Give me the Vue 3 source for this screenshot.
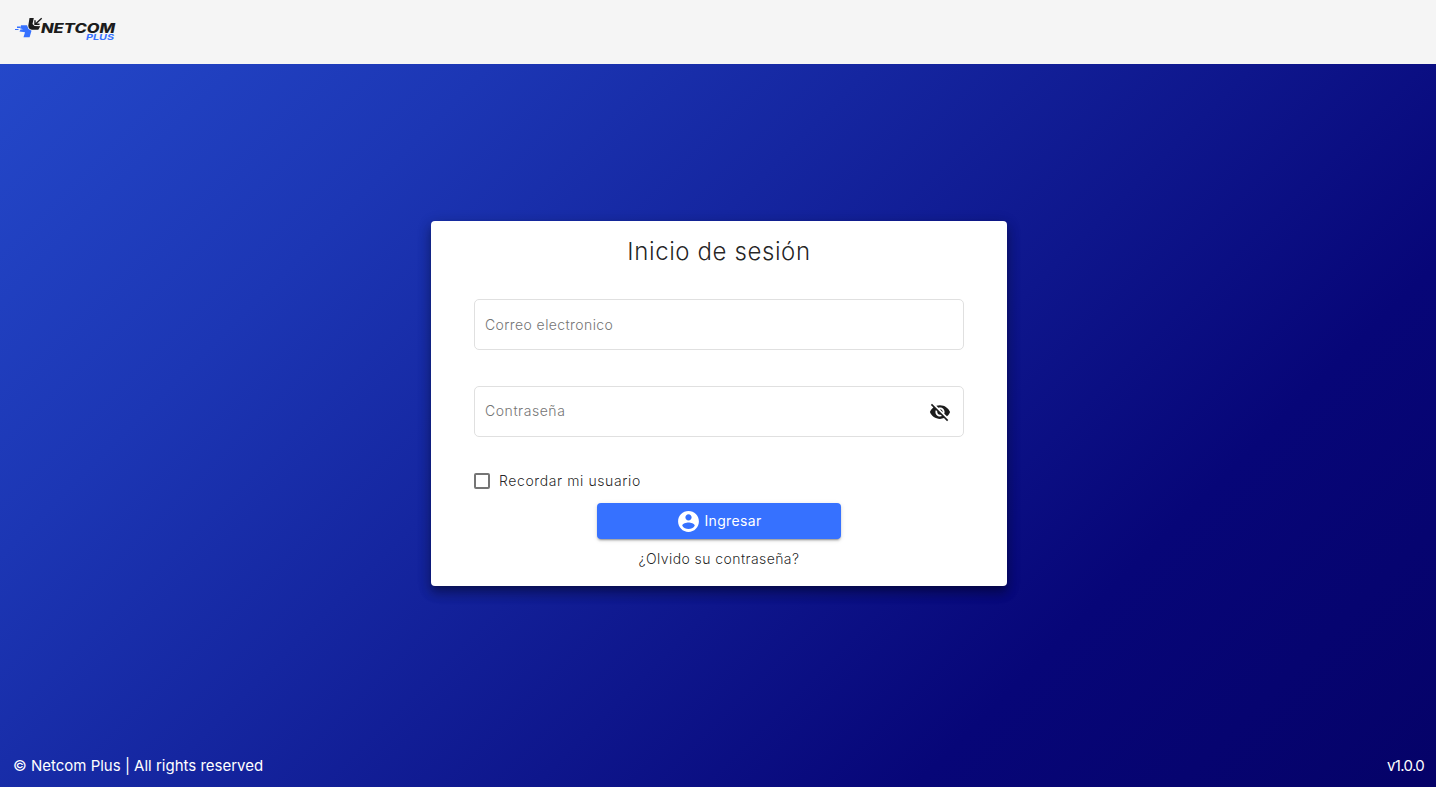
<script setup>
import { ref } from 'vue'

const email = ref('')
const password = ref('')
const remember = ref(false)
const visible = ref(false)
</script>

<template>
  <div class="page">
    <header class="toolbar">
      <svg class="logo" viewBox="0 0 104 28" role="img" aria-label="Netcom Plus">
        <path class="blue" d="M6 9.300H12L13.500 13 16.500 14.800 14.600 21.300H8.500L10 16.200 4.500 15.500 5.500 13.600 8 13.300 5 12.300Z" />
        <path class="blue" d="M2 10.500H5V12H2ZM0 13H3.500V14H0Z" />
        <path class="black" d="M14.500 2H18.800L17.500 8 19.500 10 25.300 10.300 23.300 13.700H17Q13.300 13.300 13.300 9.500Z" />
        <path class="arrow" d="M26.700 2.200L20.500 8M20 4.200V8.300H24.500" />
        <text class="black name" x="26" y="16.700" textLength="74" lengthAdjust="spacingAndGlyphs">NETCOM</text>
        <text class="blue plus" x="71" y="24.400" textLength="28" lengthAdjust="spacingAndGlyphs">PLUS</text>
      </svg>
    </header>

    <main class="content">
      <form class="card" @submit.prevent>
        <h1>Inicio de sesión</h1>
        <label class="field">
          <input v-model="email" class="email" type="text" placeholder="Correo electronico" />
        </label>
        <label class="field">
          <input v-model="password" class="password" :type="visible ? 'text' : 'password'" placeholder="Contraseña" />
          <svg class="eye" viewBox="0 0 24 24" @click.prevent="visible = !visible">
            <path d="M12 7c2.760 0 5 2.240 5 5 0 .65-.13 1.260-.36 1.830l2.920 2.920c1.510-1.260 2.700-2.890 3.430-4.750-1.730-4.390-6-7.500-11-7.500-1.400 0-2.740.25-3.980.7l2.160 2.160C10.740 7.130 11.350 7 12 7zM2 4.270l2.280 2.280.46.46C3.080 8.300 1.780 10.020 1 12c1.730 4.390 6 7.500 11 7.500 1.550 0 3.030-.3 4.380-.84l.42.42L19.730 22 21 20.730 3.270 3 2 4.270zM7.530 9.800l1.550 1.550c-.05.21-.08.43-.08.65 0 1.660 1.340 3 3 3 .22 0 .44-.03.65-.08l1.550 1.550c-.67.33-1.410.53-2.200.53-2.760 0-5-2.240-5-5 0-.79.2-1.530.53-2.200zm4.310-.78l3.150 3.150.02-.16c0-1.660-1.340-3-3-3l-.17.01z" />
          </svg>
        </label>
        <label class="remember">
          <input v-model="remember" type="checkbox" />
          <span>Recordar mi usuario</span>
        </label>
        <button class="submit" type="submit">
          <svg viewBox="0 0 24 24">
            <path d="M12 2C6.480 2 2 6.480 2 12s4.480 10 10 10 10-4.480 10-10S17.520 2 12 2zm0 3c1.660 0 3 1.340 3 3s-1.340 3-3 3-3-1.340-3-3 1.340-3 3-3zm0 14.200c-2.500 0-4.710-1.280-6-3.220.03-1.990 4-3.080 6-3.080 1.990 0 5.970 1.090 6 3.080-1.290 1.940-3.500 3.220-6 3.220z" />
          </svg>
          <span>Ingresar</span>
        </button>
        <a class="forgot">¿Olvido su contraseña?</a>
      </form>
    </main>

    <footer class="footer">
      <span class="copyright">© Netcom Plus | All rights reserved</span>
      <span class="version">v1.0.0</span>
    </footer>
  </div>
</template>

<style>
body { margin: 0; }
</style>

<style scoped>
* { box-sizing: border-box; }
.page {
  height: 100vh;
  display: flex;
  flex-direction: column;
  font-family: Inter, "Open Sans", sans-serif;
  font-size: 14px;
  font-weight: 300;
  background: linear-gradient(135deg, #254acc 0%, #1c36b4 25%, #070678 76.5%, #050268 100%);
}
.toolbar { height: 64px; flex: none; background: #f5f5f5; padding: 16px 15px; }
.logo { display: block; width: 104px; height: 28px; }
.blue { fill: #3671ff; }
.black { fill: #1c1c1c; }
.arrow { fill: none; stroke: #1c1c1c; stroke-width: 1.4; }
.name { font: italic 800 13px Inter, sans-serif; }
.plus { font: italic 700 7.5px Inter, sans-serif; }
.content { flex: 1; display: flex; justify-content: center; align-items: flex-start; padding: 157px 0 0 2px; }
.card {
  width: 576px;
  height: 365px;
  padding: 0 43px;
  display: flex;
  flex-direction: column;
  border-radius: 4px;
  background: #fff;
  color: rgba(0, 0, 0, .87);
  box-shadow: 0 5px 5px -3px rgba(0,0,0,.2), 0 8px 10px 1px rgba(0,0,0,.14), 0 3px 14px 2px rgba(0,0,0,.12), 0 6px 14px rgba(0,0,0,.15);
}
h1 { margin: 15px 0 31px; height: 32px; font-size: 24px; line-height: 32px; font-weight: 300; text-align: center; letter-spacing: .6px; }
.field { height: 51px; margin-bottom: 36px; display: flex; align-items: center; border: 1px solid #e0e0e0; border-radius: 5px; padding: 0 12px 0 10px; }
.field input { flex: 1; min-width: 0; border: 0; outline: 0; padding: 0; background: transparent; font: inherit; height: 20px; letter-spacing: .4px; }
.field .password { margin-bottom: 2px; letter-spacing: .55px; }
.field input::placeholder { color: #757575; opacity: 1; }
.eye { width: 22px; height: 22px; fill: #1c1c1c; }
.remember { display: flex; align-items: center; height: 16px; gap: 9px; margin-bottom: 14px; letter-spacing: .6px; }
.remember input { appearance: none; width: 16px; height: 16px; margin: 0; border: 2px solid #757575; border-radius: 2px; }
.remember input:checked { background: #3671ff; }
.remember span { margin-bottom: 2px; }
.submit {
  width: 244px;
  height: 36px;
  margin: 0 auto;
  padding: 0;
  display: flex;
  justify-content: center;
  align-items: center;
  gap: 3px;
  border: 0;
  border-radius: 4px;
  background: #3671ff;
  color: #fff;
  font: inherit;
  font-weight: 400;
  letter-spacing: .35px;
  box-shadow: 0 3px 1px -2px rgba(0,0,0,.2), 0 2px 2px rgba(0,0,0,.14), 0 1px 5px rgba(0,0,0,.12);
}
.submit svg { width: 25px; height: 25px; fill: #fff; margin-top: 1px; }
.submit span { margin-bottom: 2px; }
.forgot { align-self: center; margin-top: 10px; line-height: 20px; letter-spacing: .42px; }
.footer { height: 42px; flex: none; padding: 0 12px 2px 13px; display: flex; justify-content: space-between; align-items: center; color: #fff; font-size: 15px; font-weight: 400; }
.version { letter-spacing: -.65px; }
</style>
